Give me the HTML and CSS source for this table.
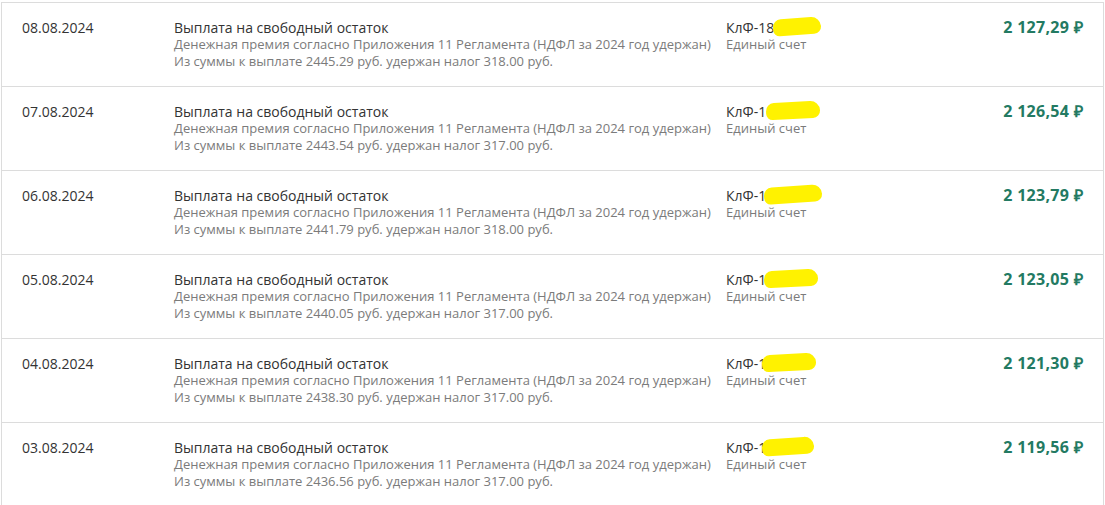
FILE: index.html
```html
<!DOCTYPE html>
<html lang="ru">
<head>
<meta charset="utf-8">
<title>Операции</title>
<link rel="stylesheet" href="styles.css">
</head>
<body>
<div class="list">
  <div class="row">
    <div class="date">08.08.2024</div>
    <div class="desc">
      <div class="title">Выплата на свободный остаток</div>
      <div class="sub">Денежная премия согласно Приложения 11 Регламента (НДФЛ за 2024 год удержан)</div>
      <div class="sub">Из суммы к выплате 2445.29 руб. удержан налог 318.00 руб.</div>
    </div>
    <div class="acc">
      <div class="acc-no">КлФ-18<span class="mark m1"></span></div>
      <div class="sub">Единый счет</div>
    </div>
    <div class="amount">2 127,29 ₽</div>
  </div>
  <div class="row">
    <div class="date">07.08.2024</div>
    <div class="desc">
      <div class="title">Выплата на свободный остаток</div>
      <div class="sub">Денежная премия согласно Приложения 11 Регламента (НДФЛ за 2024 год удержан)</div>
      <div class="sub">Из суммы к выплате 2443.54 руб. удержан налог 317.00 руб.</div>
    </div>
    <div class="acc">
      <div class="acc-no">КлФ-1<span class="mark m2"></span></div>
      <div class="sub">Единый счет</div>
    </div>
    <div class="amount">2 126,54 ₽</div>
  </div>
  <div class="row">
    <div class="date">06.08.2024</div>
    <div class="desc">
      <div class="title">Выплата на свободный остаток</div>
      <div class="sub">Денежная премия согласно Приложения 11 Регламента (НДФЛ за 2024 год удержан)</div>
      <div class="sub">Из суммы к выплате 2441.79 руб. удержан налог 318.00 руб.</div>
    </div>
    <div class="acc">
      <div class="acc-no">КлФ-1<span class="mark m3"></span></div>
      <div class="sub">Единый счет</div>
    </div>
    <div class="amount">2 123,79 ₽</div>
  </div>
  <div class="row">
    <div class="date">05.08.2024</div>
    <div class="desc">
      <div class="title">Выплата на свободный остаток</div>
      <div class="sub">Денежная премия согласно Приложения 11 Регламента (НДФЛ за 2024 год удержан)</div>
      <div class="sub">Из суммы к выплате 2440.05 руб. удержан налог 317.00 руб.</div>
    </div>
    <div class="acc">
      <div class="acc-no">КлФ-1<span class="mark m4"></span></div>
      <div class="sub">Единый счет</div>
    </div>
    <div class="amount">2 123,05 ₽</div>
  </div>
  <div class="row">
    <div class="date">04.08.2024</div>
    <div class="desc">
      <div class="title">Выплата на свободный остаток</div>
      <div class="sub">Денежная премия согласно Приложения 11 Регламента (НДФЛ за 2024 год удержан)</div>
      <div class="sub">Из суммы к выплате 2438.30 руб. удержан налог 317.00 руб.</div>
    </div>
    <div class="acc">
      <div class="acc-no">КлФ-1<span class="mark m5"></span></div>
      <div class="sub">Единый счет</div>
    </div>
    <div class="amount">2 121,30 ₽</div>
  </div>
  <div class="row">
    <div class="date">03.08.2024</div>
    <div class="desc">
      <div class="title">Выплата на свободный остаток</div>
      <div class="sub">Денежная премия согласно Приложения 11 Регламента (НДФЛ за 2024 год удержан)</div>
      <div class="sub">Из суммы к выплате 2436.56 руб. удержан налог 317.00 руб.</div>
    </div>
    <div class="acc">
      <div class="acc-no">КлФ-1<span class="mark m6"></span></div>
      <div class="sub">Единый счет</div>
    </div>
    <div class="amount">2 119,56 ₽</div>
  </div>
</div>
</body>
</html>
```
FILE: styles.css
```css
html, body {
  margin: 0;
  padding: 0;
  background: #ffffff;
}

body {
  font-family: "Open Sans", "Liberation Sans", sans-serif;
  color: #333333;
  overflow: hidden;
}

.list {
  margin: 2px 0 0 1px;
  width: 1103px;
  box-sizing: border-box;
  border-left: 1px solid #dcdcdc;
  border-right: 1px solid #dcdcdc;
}

.row {
  display: grid;
  grid-template-columns: 152px 552px 1fr auto;
  align-items: start;
  padding: 16px 20px 16px 20px;
  border-top: 1px solid #dcdcdc;
  height: 84px;
  box-sizing: border-box;
}

.date {
  font-size: 14px;
  line-height: 17px;
  color: #333333;
}

.title,
.acc-no {
  font-size: 14px;
  line-height: 17px;
  color: #333333;
  white-space: nowrap;
}

.sub {
  font-size: 13px;
  line-height: 17px;
  color: #7b7b7b;
  white-space: nowrap;
}

.acc-no {
  position: relative;
}

.mark {
  position: absolute;
  top: -1px;
  height: 17px;
  background: #fff200;
  border-radius: 10px 12px 9px 8px;
}

.m1 { left: 47px; width: 48px; transform: rotate(-4deg); }
.m2 { left: 40px; width: 54px; transform: rotate(-3deg); }
.m3 { left: 38px; width: 58px; transform: rotate(-4deg); }
.m4 { left: 38px; width: 54px; transform: rotate(-3deg); }
.m5 { left: 36px; width: 54px; transform: rotate(-3deg); }
.m6 { left: 36px; width: 52px; transform: rotate(-4deg); }

.amount {
  font-size: 16px;
  line-height: 17px;
  font-weight: 700;
  color: #237a62;
  text-align: right;
  white-space: nowrap;
  letter-spacing: 0.3px;
}
```
